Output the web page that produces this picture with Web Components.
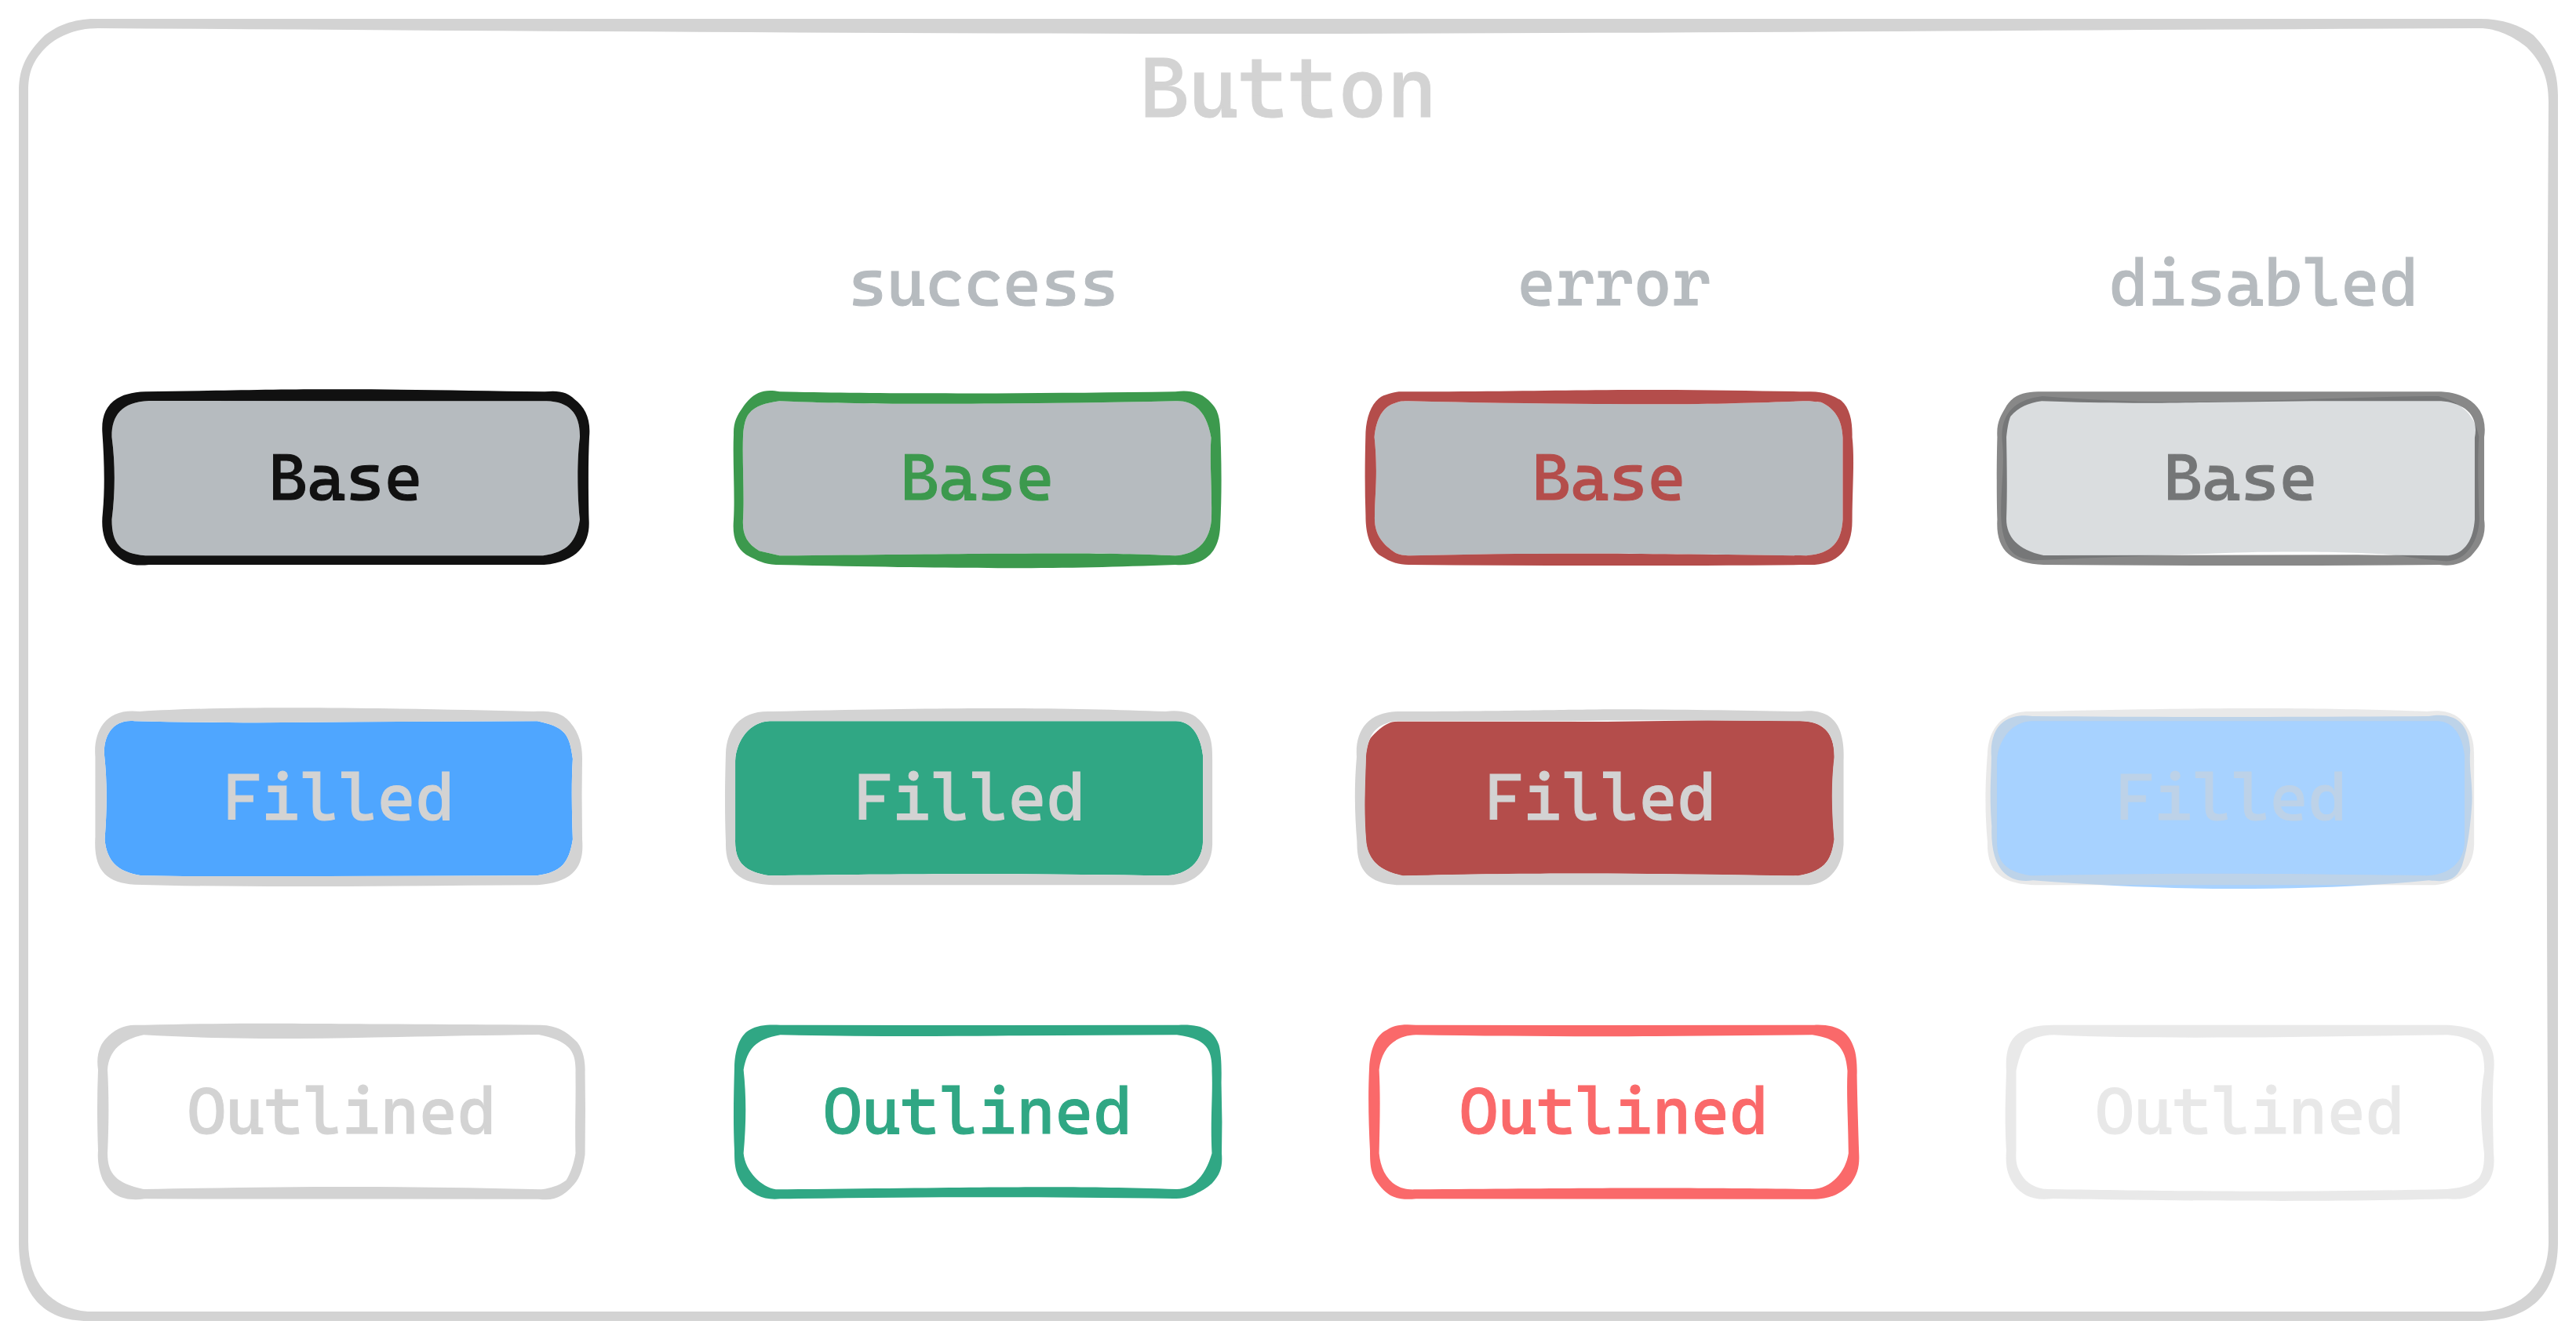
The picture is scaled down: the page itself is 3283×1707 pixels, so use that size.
<!DOCTYPE html>
<html lang="en">
<head>
<meta charset="utf-8">
<title>Button</title>
<style>
  body { margin: 0; background: #fff; font-family: "Cascadia Code", "Cascadia Mono", "DejaVu Sans Mono", monospace; }
</style>
</head>
<body>
<sketch-panel heading="Button">
  <state-labels>
    <span>success</span>
    <span>error</span>
    <span>disabled</span>
  </state-labels>
  <button-row variant="base">
    <sketch-button shape="base" style="--ink:#111;--fill:#b6bbbf">Base</sketch-button>
    <sketch-button shape="base-success" style="--ink:#3c994d;--fill:#b6bbbf">Base</sketch-button>
    <sketch-button shape="base-error" style="--ink:#b44d4b;--fill:#b6bbbf">Base</sketch-button>
    <sketch-button shape="base-disabled" disabled style="--ink:#111;--fill:#b6bbbf">Base</sketch-button>
  </button-row>
  <button-row variant="filled">
    <sketch-button shape="filled" style="--ink:#d3d3d3;--fill:#4fa6ff">Filled</sketch-button>
    <sketch-button shape="filled-success" style="--ink:#d3d3d3;--fill:#30a784">Filled</sketch-button>
    <sketch-button shape="filled-error" style="--ink:#d3d3d3;--fill:#b44d4b">Filled</sketch-button>
    <sketch-button shape="filled-disabled" disabled style="--ink:#d3d3d3;--fill:#4fa6ff">Filled</sketch-button>
  </button-row>
  <button-row variant="outlined">
    <sketch-button shape="outlined" style="--ink:#d3d3d3">Outlined</sketch-button>
    <sketch-button shape="outlined-success" style="--ink:#30a784">Outlined</sketch-button>
    <sketch-button shape="outlined-error" style="--ink:#fa696a">Outlined</sketch-button>
    <sketch-button shape="outlined-disabled" disabled style="--ink:#d3d3d3">Outlined</sketch-button>
  </button-row>
</sketch-panel>

<script>
// Hand-drawn outlines. box = viewBox; outer/inner bound the stroke; fill is the area behind it.
const SHAPES = {
  'base': {
    box: '66 85 1391 663',
    outer: 'M190 86C360 83 560 77 700 77C900 76 1100 81 1330 86C1375 80 1395 90 1415 115C1445 145 1462 190 1457 260C1454 350 1454 440 1456 575C1460 660 1430 735 1328 748L200 748C150 755 128 740 100 705C70 665 63 610 68 550C75 450 72 340 67 245C62 150 95 90 190 86Z',
    inner: 'M200 121L1335 122C1400 124 1432 170 1430 262C1422 340 1422 480 1430 575C1420 660 1395 700 1325 713L190 713C120 705 94 670 94 575C104 470 104 360 94 260C93 180 120 125 200 121Z'
  },
  'base-success': {
    box: '79 85 1391 663',
    outer: 'M210 86C450 94 900 95 1340 86C1400 75 1430 105 1452 145C1470 180 1468 230 1470 300C1472 400 1472 500 1468 600C1465 700 1425 755 1340 748C1000 765 800 765 200 748C165 745 150 735 115 710C85 680 75 640 79 575C83 480 76 350 79 250C78 200 90 175 103 150C130 95 160 72 210 86Z',
    inner: 'M210 122C450 135 800 137 1340 122C1395 118 1430 165 1442 262C1437 350 1445 440 1443 575C1438 650 1410 705 1340 713C1100 698 950 705 210 713L152 695C115 665 103 630 106 570C110 480 103 350 106 250C108 215 113 185 123 170C140 140 170 130 210 122Z'
  },
  'base-error': {
    box: '91 85 1391 663',
    outer: 'M210 86C500 86 700 79 880 79C1050 78 1200 83 1350 86C1400 82 1430 103 1450 120C1475 150 1482 200 1481 260C1488 340 1482 440 1481 575C1482 690 1440 750 1355 748C1000 752 600 752 215 748C180 748 160 735 130 710C100 675 92 620 92 560C89 450 90 340 92 240C95 170 115 110 150 98C175 84 190 86 210 86Z',
    inner: 'M215 122C450 130 700 134 920 134C1100 134 1250 126 1340 122C1365 120 1375 125 1392 126C1430 150 1452 190 1454 262L1454 575C1450 660 1425 705 1350 713C900 705 600 700 220 713C200 712 190 710 178 703C140 670 115 630 118 560C118 480 128 400 117 260C122 190 140 145 175 130C190 122 200 122 215 122Z'
  },
  'base-disabled': {
    box: '102 85 1391 663',
    outer: 'M220 86L1370 86C1450 92 1505 150 1493 260L1493 575C1500 640 1480 680 1455 715C1430 745 1400 755 1365 748C1000 752 600 752 235 748C140 742 98 690 103 575C101 500 101 350 103 260C100 200 115 175 125 150C145 100 175 88 220 86Z',
    inner: 'M230 122C400 131 500 130 700 127L1000 122L1370 122C1430 128 1480 170 1466 262L1466 575C1462 650 1440 705 1390 713L1200 711L1130 710L235 712C160 690 128 640 129 570C132 450 130 350 129 260C132 220 136 195 141 180C165 145 190 130 230 122Z',
    fill: 'M232 103C350 115 480 125 620 125C900 125 1100 105 1362 103C1420 125 1465 165 1478 258C1474 340 1476 450 1479 575C1478 650 1445 738 1380 734C1340 730 1290 722 1250 713C1130 695 850 695 700 706C550 712 400 720 225 730C160 735 130 700 118 620C105 520 125 400 118 290C110 200 130 120 232 103Z'
  },
  'filled': {
    box: '47 81 1391 663',
    outer: 'M175 81C330 67 550 66 650 67C900 69 1100 75 1300 81C1360 77 1385 92 1405 125C1430 165 1438 210 1438 260L1437 400L1438 570C1445 680 1410 735 1310 745C900 748 500 756 160 743C80 735 42 690 48 560L48 255C42 160 75 65 175 81Z',
    inner: 'M160 118C400 126 600 124 800 121L1310 118C1390 140 1402 170 1411 262C1407 350 1408 450 1411 570C1400 660 1380 695 1308 709L700 711L300 711L180 709C110 695 80 650 75 570C82 450 82 350 74 250C70 180 95 110 160 118Z'
  },
  'filled-success': {
    box: '75 81 1391 663',
    outer: 'M205 81C500 72 700 69 850 69C1050 69 1200 75 1330 81C1400 70 1430 105 1450 155C1465 195 1464 230 1464 290L1464 590C1462 690 1405 746 1340 745L210 745C110 740 73 690 75 580C72 480 72 380 75 240C78 150 115 75 205 81Z',
    inner: 'M200 118L1360 118C1400 118 1430 165 1437 250L1437 580C1435 650 1400 705 1330 709C1000 702 700 699 200 709C130 695 100 660 102 570L102 270C105 190 145 120 200 118Z'
  },
  'filled-error': {
    box: '65 81 1391 663',
    outer: 'M190 81C500 80 650 73 800 73C1000 73 1150 78 1330 81C1400 70 1430 105 1445 155C1455 195 1456 230 1455 270L1455 590C1450 690 1405 748 1340 745L180 745C100 738 65 690 66 580C60 480 57 380 65 255C60 150 100 80 190 81Z',
    inner: 'M185 118L600 118C720 117 850 113 1000 115L1330 118C1395 118 1430 160 1428 258C1420 350 1420 450 1428 570C1420 640 1410 690 1325 709C1000 704 700 692 197 709C130 690 96 650 92 570C85 450 90 350 92 250C98 190 108 145 150 127C160 120 170 118 185 118Z',
    fill: 'M190 119L780 120L1070 115L1330 117C1395 118 1430 160 1429 258C1421 350 1421 450 1429 570C1420 640 1410 690 1325 710C1000 705 700 693 197 710C130 690 95 650 91 570C84 450 89 350 91 250C94 215 99 195 105 182C118 160 140 135 158 125C170 120 180 119 190 119Z'
  },
  'filled-disabled': {
    box: '75 81 1391 663',
    outer: 'M205 81C500 72 700 69 850 69C1050 69 1200 75 1330 81C1400 70 1430 105 1450 155C1465 195 1464 230 1464 290L1464 590C1462 690 1405 746 1340 745L210 745C110 740 73 690 75 580C68 480 67 380 75 240C78 150 115 75 205 81Z',
    inner: 'M200 118L1360 118C1400 118 1430 165 1437 250L1437 580C1435 650 1400 705 1330 709C1000 702 700 695 200 709C130 695 100 660 102 570L102 270C105 190 145 120 200 118Z',
    fill: 'M203 99C600 103 900 103 1335 99C1420 80 1450 140 1453 230C1449 300 1460 350 1458 430C1455 500 1447 600 1430 670C1415 720 1395 737 1335 727C1150 752 950 759 780 759C600 759 400 748 205 727C110 745 83 640 87 520C80 400 85 350 86 255C80 150 120 85 203 99Z'
  },
  'outlined': {
    box: '57 80 1391 663',
    outer: 'M165 79L190 79C300 76 400 73 500 73C700 73 1000 77 1320 79C1370 80 1400 110 1425 145C1445 180 1448 230 1447 260L1448 400L1447 575C1442 620 1435 660 1415 690C1385 735 1360 753 1315 745L190 744C120 757 90 720 70 670C58 630 55 590 57 560C54 450 54 350 57 250C50 190 65 150 80 130C100 100 130 78 165 79Z',
    inner: 'M187 117C330 129 500 131 620 131C850 128 1050 120 1315 116C1400 140 1422 175 1420 258C1421 400 1418 450 1420 570C1415 610 1405 650 1393 673C1370 695 1350 702 1322 708C900 693 600 697 187 707C110 685 84 650 84 570C88 450 88 350 84 250C88 175 125 135 187 117Z'
  },
  'outlined-success': {
    box: '82 80 1391 663',
    outer: 'M213 79L600 80L1350 79C1420 75 1450 100 1465 155C1472 190 1473 240 1472 300L1474 450L1473 570C1476 620 1470 650 1445 685C1425 710 1400 725 1380 735C1365 742 1355 744 1335 743C900 735 600 737 213 744C165 750 140 730 110 695C85 650 82 620 82 560C78 450 80 350 82 240C83 180 95 120 125 98C150 78 180 77 213 79Z',
    inner: 'M213 117C450 124 700 122 900 120L1345 117C1420 130 1447 160 1445 255C1448 350 1440 440 1445 570C1430 640 1400 705 1345 707C1000 692 900 700 200 708C160 700 113 640 108 570C116 450 116 350 108 250C120 170 140 135 213 117Z'
  },
  'outlined-error': {
    box: '82 80 1391 663',
    outer: 'M213 79L600 80L1350 79C1420 75 1450 110 1463 165C1471 190 1473 240 1472 270C1473 360 1476 480 1478 570C1480 620 1474 650 1455 685C1425 725 1395 748 1335 745L213 744C155 752 130 730 105 685C85 650 82 620 82 560C78 450 76 350 80 240C83 180 95 120 130 98C150 78 180 75 213 79Z',
    inner: 'M213 117C450 122 700 124 900 122L1345 117C1410 130 1440 160 1445 255C1442 350 1447 440 1448 570C1440 640 1400 705 1345 707C1000 702 900 700 210 708C140 712 113 640 108 570C110 450 112 350 108 250C115 170 150 120 213 117Z'
  },
  'outlined-disabled': {
    box: '115 80 1243 663',
    outer: 'M235 79L700 79L1240 79C1290 83 1320 100 1335 125C1357 170 1362 200 1358 260C1354 350 1356 450 1358 570C1363 640 1350 680 1325 710C1300 740 1280 748 1240 744C1000 753 750 756 235 743C190 750 165 740 140 700C118 660 112 620 115 560C111 450 112 400 115 255C112 190 120 140 145 112C170 85 200 80 235 79Z',
    inner: 'M235 117C400 129 600 128 800 126L1240 117C1280 120 1310 140 1325 170C1332 195 1335 225 1334 258C1323 350 1324 450 1334 570C1334 610 1332 640 1320 665C1300 695 1270 702 1240 707C900 718 700 718 225 707C190 708 165 680 155 655C140 620 139 600 140 560L140 255C146 210 153 180 163 155C180 130 205 118 235 117Z'
  }
};

class SketchPanel extends HTMLElement {
  connectedCallback() {
    this.attachShadow({ mode: 'open' }).innerHTML = `
      <style>
        :host { display: block; position: relative; box-sizing: border-box; min-height: 100vh; padding: 52px 0 0; }
        svg { position: absolute; inset: 0; width: 100%; height: 100%; }
        h1 { margin: 0 0 140px; font-size: 108px; line-height: 120px; font-weight: 400; text-align: center; color: #d3d3d3; -webkit-text-stroke: 1px #d3d3d3; }
        main { position: relative; display: flex; flex-direction: column; }
      </style>
      <svg viewBox="0 0 3283 1707" preserveAspectRatio="none" aria-hidden="true">
        <path fill="#d3d3d3" fill-rule="evenodd" d="M125 24L3160 24C3190 24 3212 32 3229 45C3250 67 3260 90 3260 122L3260 1583C3260 1650 3225 1684 3157 1684L112 1684C55 1684 24 1650 24 1583L24 117C24 85 35 67 57 45C72 33 95 23 125 24Z
          M125 36C600 39 1100 43 1640 43C2200 42 2700 38 3157 36C3180 35 3203 46 3220 60C3240 80 3248 100 3248 130C3246 500 3244 1000 3248 1583C3248 1640 3210 1672 3157 1672L112 1672C65 1668 36 1635 36 1583L36 117C36 95 40 80 57 62C72 47 95 36 125 36Z"/>
      </svg>
      <main><h1></h1><slot></slot></main>`;
    this.shadowRoot.querySelector('h1').textContent = this.getAttribute('heading');
  }
}

class StateLabels extends HTMLElement {
  connectedCallback() {
    this.attachShadow({ mode: 'open' }).innerHTML = `
      <style>
        :host { display: flex; justify-content: space-between; padding: 0 201px 0 1081px; margin-bottom: 91px; font-size: 84px; line-height: 96px; color: #b6bbbf; -webkit-text-stroke: 1px #b6bbbf; }
      </style>
      <slot></slot>`;
  }
}

class ButtonRow extends HTMLElement {
  connectedCallback() {
    this.attachShadow({ mode: 'open' }).innerHTML = `
      <style>
        :host { display: flex; justify-content: space-between; }
        :host([variant="base"]) { padding: 0 117px 0 130px; margin-bottom: 187px; }
        :host([variant="filled"]) { padding: 0 129px 0 121px; margin-bottom: 179px; }
        :host([variant="outlined"]) { padding: 0 105px 0 125px; }
      </style>
      <slot></slot>`;
  }
}

class SketchButton extends HTMLElement {
  connectedCallback() {
    const s = SHAPES[this.getAttribute('shape')];
    const off = this.hasAttribute('disabled');
    this.attachShadow({ mode: 'open' }).innerHTML = `
      <style>
        :host { display: block; flex: 0 1 621px; min-width: 0; height: 221px; --alpha: 1; }
        :host([disabled]) { --alpha: .5; }
        button { display: grid; grid-template: 100% / 100%; place-items: center; width: 100%; height: 100%; margin: 0; padding: 0; border: 0; background: none; font: inherit; font-size: 84px; line-height: 96px; color: var(--ink); cursor: pointer; }
        button:disabled { cursor: default; }
        svg, span { grid-area: 1 / 1; }
        svg { width: 100%; height: 100%; overflow: visible; }
        path, span { opacity: var(--alpha); }
        span { padding-bottom: 4px; -webkit-text-stroke: 1px var(--ink); }
        .fill { fill: var(--fill, none); }
        .ring { fill: var(--ink); fill-rule: evenodd; }
      </style>
      <button type="button" ${off ? 'disabled' : ''}>
        <svg viewBox="${s.box}" preserveAspectRatio="none" aria-hidden="true">
          <path class="fill" d="${s.fill || s.inner}"/>
          <path class="ring" d="${s.outer}${s.inner}"/>
        </svg>
        <span><slot></slot></span>
      </button>`;
  }
}

customElements.define('sketch-panel', SketchPanel);
customElements.define('state-labels', StateLabels);
customElements.define('button-row', ButtonRow);
customElements.define('sketch-button', SketchButton);
</script>
</body>
</html>
